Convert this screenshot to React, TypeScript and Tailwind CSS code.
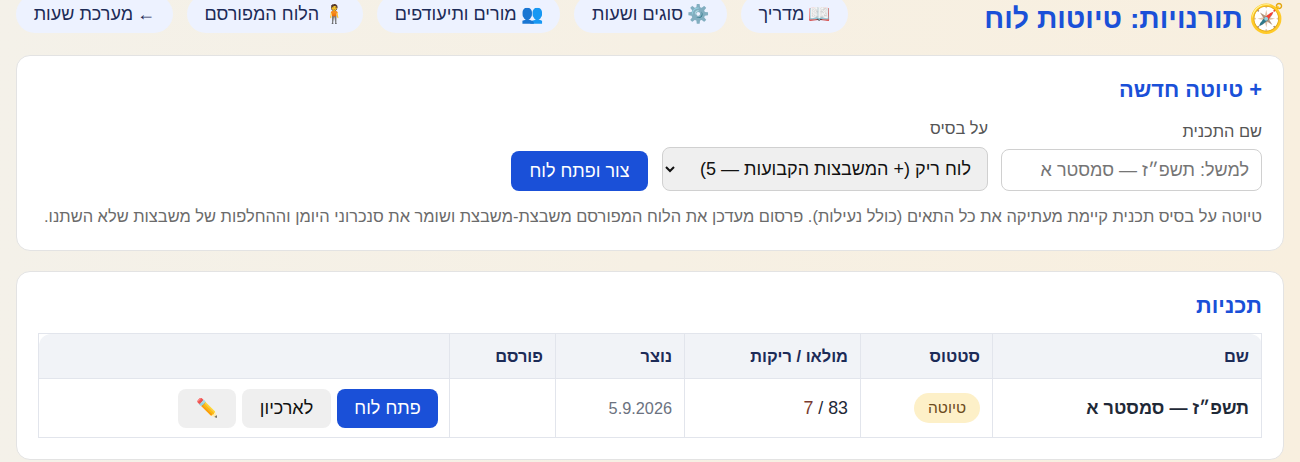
const links = [
  { icon: "📖", label: "מדריך" },
  { icon: "⚙️", label: "סוגים ושעות" },
  { icon: "👥", label: "מורים ותיעודפים" },
  { icon: "🧍", label: "הלוח המפורסם" },
  { icon: "←", label: "מערכת שעות" },
];

const thClass = "border border-[#e2e5ec] bg-[#f1f3f7] px-3 text-right text-[16.4px] font-bold text-[#1c2b57]";
const tdClass = "border border-[#e2e5ec] px-3 text-right";

export default function App() {
  return (
    <div
      dir="rtl"
      className="h-[462px] overflow-hidden bg-gradient-to-l from-[#f8efdf] to-[#f4f1e9] px-4 font-['Liberation_Sans',sans-serif] text-[#1f2937]"
    >
      <header className="-mt-[5px] flex h-[60px] items-start justify-between">
        <h1 className="mt-[2px] flex items-center gap-1.5 text-[28.4px] font-bold text-[#1a50d8]">
          <span>🧭</span>
          <span>תורנויות: טיוטות לוח</span>
        </h1>
        <nav className="flex gap-[14px]">
          {links.map((l) => (
            <a key={l.label} className="flex h-[38px] items-center gap-1 rounded-full bg-[#edf2ff] px-[17.7px] text-[18px] text-[#1c2b57]">
              <span>{l.icon}</span>
              {l.label}
            </a>
          ))}
        </nav>
      </header>

      <section className="h-[196px] rounded-[14px] border border-[#e3e3e3] bg-white px-[21px] pt-[20px]">
        <h2 className="text-[21.8px] leading-[28px] font-bold text-[#1a50d8]">+ טיוטה חדשה</h2>
        <div className="mt-[12px] flex items-end">
          <label className="flex flex-col gap-[6px]">
            <span className="text-[16.4px] leading-[24px] text-[#555]">שם התכנית</span>
            <input
              placeholder="למשל: תשפ״ז — סמסטר א"
              className="h-[42px] w-[261px] rounded-lg border border-[#d0d0d0] px-3 text-[18px] placeholder:text-[#757575]"
            />
          </label>
          <label className="mr-[13px] flex flex-col gap-[7px]">
            <span className="text-[16.4px] leading-[24px] text-[#555]">על בסיס</span>
            <select className="h-[44px] w-[326px] rounded-lg border border-[#d0d0d0] bg-[#efefef] px-3 text-[18px] text-[#111]">
              <option>לוח ריק (+ המשבצות הקבועות — 5)</option>
            </select>
          </label>
          <button className="mr-[14px] h-[40px] w-[137px] rounded-lg bg-[#1a50d8] text-[18px] text-white">צור ופתח לוח</button>
        </div>
        <p className="mt-[13px] text-[16.45px] leading-[24px] whitespace-nowrap text-[#6b6b6b]">
          טיוטה על בסיס תכנית קיימת מעתיקה את כל התאים (כולל נעילות). פרסום מעדכן את הלוח המפורסם משבצת-משבצת ושומר את סנכרוני היומן וההחלפות של משבצות שלא השתנו.
        </p>
      </section>

      <section className="mt-[20px] h-[189px] rounded-[14px] border border-[#e3e3e3] bg-white px-[21px] pt-[20px]">
        <h2 className="text-[21.8px] leading-[28px] font-bold text-[#1a50d8]">תכניות</h2>
        <table className="mt-[13px] w-full table-fixed border-collapse">
          <thead>
            <tr className="h-[45px]">
              <th className={`${thClass} w-[269px] rounded-tr-[12px]`}>שם</th>
              <th className={`${thClass} w-[132px]`}>סטטוס</th>
              <th className={`${thClass} w-[176px]`}>מולאו / ריקות</th>
              <th className={`${thClass} w-[129px]`}>נוצר</th>
              <th className={`${thClass} w-[106px]`}>פורסם</th>
              <th className={`${thClass} rounded-tl-[12px]`}></th>
            </tr>
          </thead>
          <tbody>
            <tr className="h-[59px]">
              <td className={`${tdClass} text-[18px] font-bold`}>תשפ״ז — סמסטר א</td>
              <td className={tdClass}>
                <span className="inline-flex h-[30px] w-[66px] items-center justify-center rounded-full bg-[#fdf0c8] text-[15.5px] text-[#6b4a1c]">טיוטה</span>
              </td>
              <td className={`${tdClass} text-[17.8px]`}>
                83 / <span className="text-[#7a3b2e]">7</span>
              </td>
              <td className={`${tdClass} text-[16.3px] text-[#6b7280]`}>5.9.2026</td>
              <td className={tdClass}></td>
              <td className={`${tdClass} pr-[11px]`}>
                <div className="flex gap-[6px]">
                  <button className="h-[39px] w-[101px] rounded-lg bg-[#1a50d8] text-[18px] text-white">פתח לוח</button>
                  <button className="h-[39px] w-[89px] rounded-lg bg-[#efefef] text-[18px] text-[#111]">לארכיון</button>
                  <button className="h-[39px] w-[58px] rounded-lg bg-[#efefef] text-[18px]">✏️</button>
                </div>
              </td>
            </tr>
          </tbody>
        </table>
      </section>
    </div>
  );
}
